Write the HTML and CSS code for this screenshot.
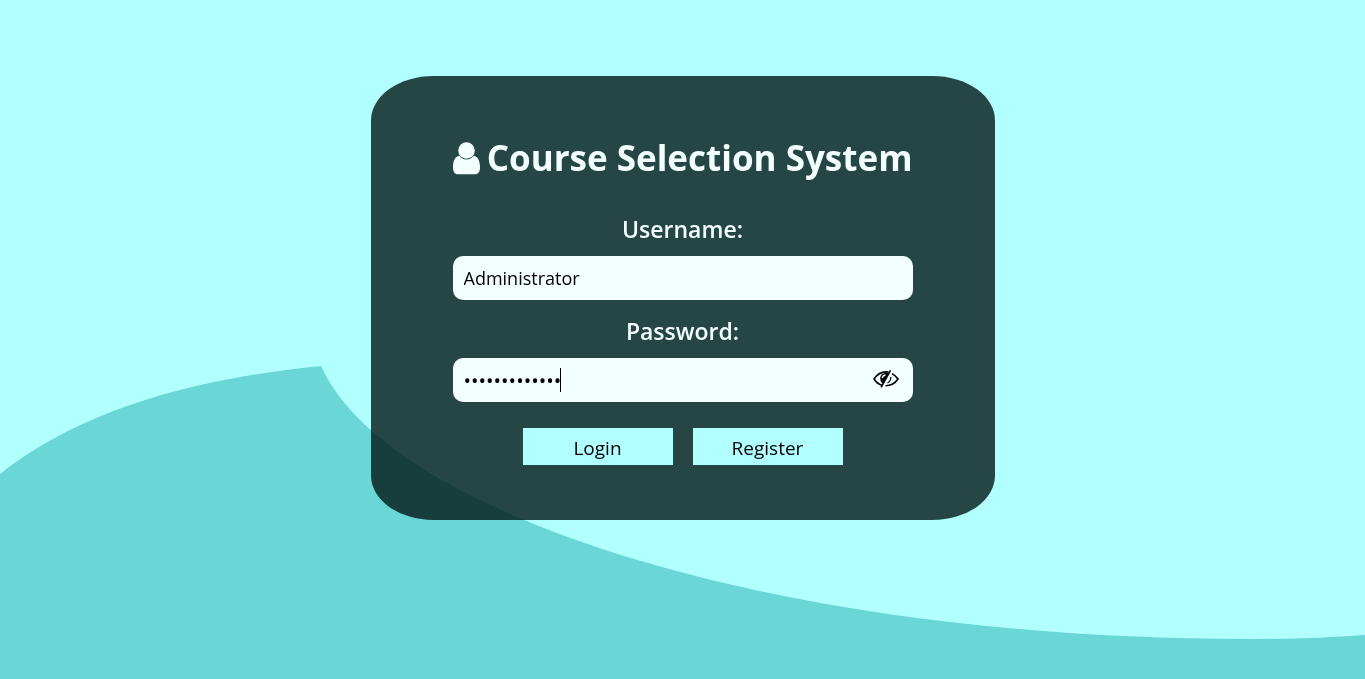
FILE: index.html
```html
<!DOCTYPE html>
<html lang="en">
<head>
<meta charset="utf-8">
<meta name="viewport" content="width=device-width, initial-scale=1">
<title>Course Selection System</title>
<link rel="stylesheet" href="styles.css">
</head>
<body>
<svg class="wave" viewBox="0 0 1365 679" preserveAspectRatio="none" aria-hidden="true">
  <path d="M0 474C75 415 180 380 321 366C385 510 760 639 1250 639Q1310 639 1365 635V679H0Z"/>
</svg>
<main class="page">
  <form class="card">
    <h1 class="title">
      <svg class="user-icon" viewBox="0 0 27 33" aria-hidden="true">
        <circle cx="13.5" cy="8.5" r="8.3"/>
        <path d="M6.3 13.8C2 14.6 0 18.8 0 25.7C0 30 2.2 32.3 5.5 32.3H21.5C24.8 32.3 27 30 27 25.7C27 18.8 25 14.6 20.7 13.8C19 16 16.5 17.5 13.5 17.5S8 16 6.3 13.8Z"/>
      </svg>
      <span>Course Selection System</span>
    </h1>
    <label class="label" for="username">Username:</label>
    <input class="field" id="username" type="text" value="Administrator">
    <label class="label" for="password">Password:</label>
    <div class="password">
      <input class="field field-secret" id="password" type="password" value="Administrator">
      <span class="caret"></span>
      <button class="toggle" type="button" aria-label="Show password">
        <svg class="eye-icon" viewBox="0 0 26 20" aria-hidden="true">
          <path class="line" d="M15.5 3.1Q6.5 1.8 1 10Q4.2 14.8 8.8 16.3M19 4.6Q22.8 6.5 25 10Q20.5 16.6 12.5 16.8"/>
          <path class="line thin" d="M17.8 8Q18 12 14.5 14"/>
          <path d="M16.8 1L18.2 1.8L8.8 18.8L7.4 18L9.4 14.4Q6.8 12.2 7.2 8.8Q8.1 4.3 12.6 4L15.2 4Z"/>
          <path class="shine" d="M9.2 9Q9.8 6.4 12.5 6"/>
        </svg>
      </button>
    </div>
    <div class="actions">
      <button class="button" type="submit">Login</button>
      <button class="button" type="button">Register</button>
    </div>
  </form>
</main>
</body>
</html>
```

FILE: styles.css
```css
* {
  box-sizing: border-box;
}

body {
  margin: 0;
  background: #b2ffff;
  color: #f3ffff;
  font-family: "Open Sans", "Noto Sans", sans-serif;
}

.wave {
  position: fixed;
  inset: 0;
  width: 100%;
  height: 100%;
  fill: #6ad6d6;
}

.page {
  position: relative;
  display: flex;
  justify-content: center;
  padding: 76px 16px;
}

.card {
  display: flex;
  flex-direction: column;
  width: 100%;
  max-width: 624px;
  padding: 56px 82px 55px;
  border-radius: 10%;
  background: rgba(3, 23, 23, 0.8);
}

.title {
  display: flex;
  align-items: center;
  justify-content: space-between;
  margin: 0 0 24px;
  font-size: 35px;
  line-height: 52px;
  font-weight: 700;
  white-space: nowrap;
}

.user-icon {
  flex: none;
  width: 27px;
  height: 33px;
  fill: currentColor;
}

.label {
  padding: 5px 0 11px;
  font-size: 23px;
  line-height: 32px;
  font-weight: 600;
  text-align: center;
}

.field {
  width: 100%;
  height: 44px;
  margin-bottom: 10px;
  padding: 0 11px;
  border: 0;
  border-radius: 10px;
  outline: 0;
  background: #f3ffff;
  color: #000;
  font: 500 18px "Open Sans", "Noto Sans", sans-serif;
}

.field-secret {
  font-size: 20px;
}

.password {
  position: relative;
}

.caret {
  position: absolute;
  top: 10px;
  left: 107px;
  width: 1px;
  height: 24px;
  background: #000;
}

.toggle {
  position: absolute;
  top: 11px;
  right: 14px;
  padding: 0;
  border: 0;
  background: none;
}

.eye-icon {
  display: block;
  width: 26px;
  height: 20px;
}

.line,
.shine {
  fill: none;
  stroke: #000;
  stroke-width: 1.6;
}

.thin {
  stroke-width: 1.2;
}

.shine {
  stroke: #f3ffff;
  stroke-width: 1.3;
}

.actions {
  display: flex;
  justify-content: center;
  gap: 20px;
  margin-top: 16px;
}

.button {
  width: 150px;
  height: 37px;
  padding: 2px 0 0;
  border: 0;
  background: #b2ffff;
  color: #000;
  font: 500 19px "Open Sans", "Noto Sans", sans-serif;
}
```
